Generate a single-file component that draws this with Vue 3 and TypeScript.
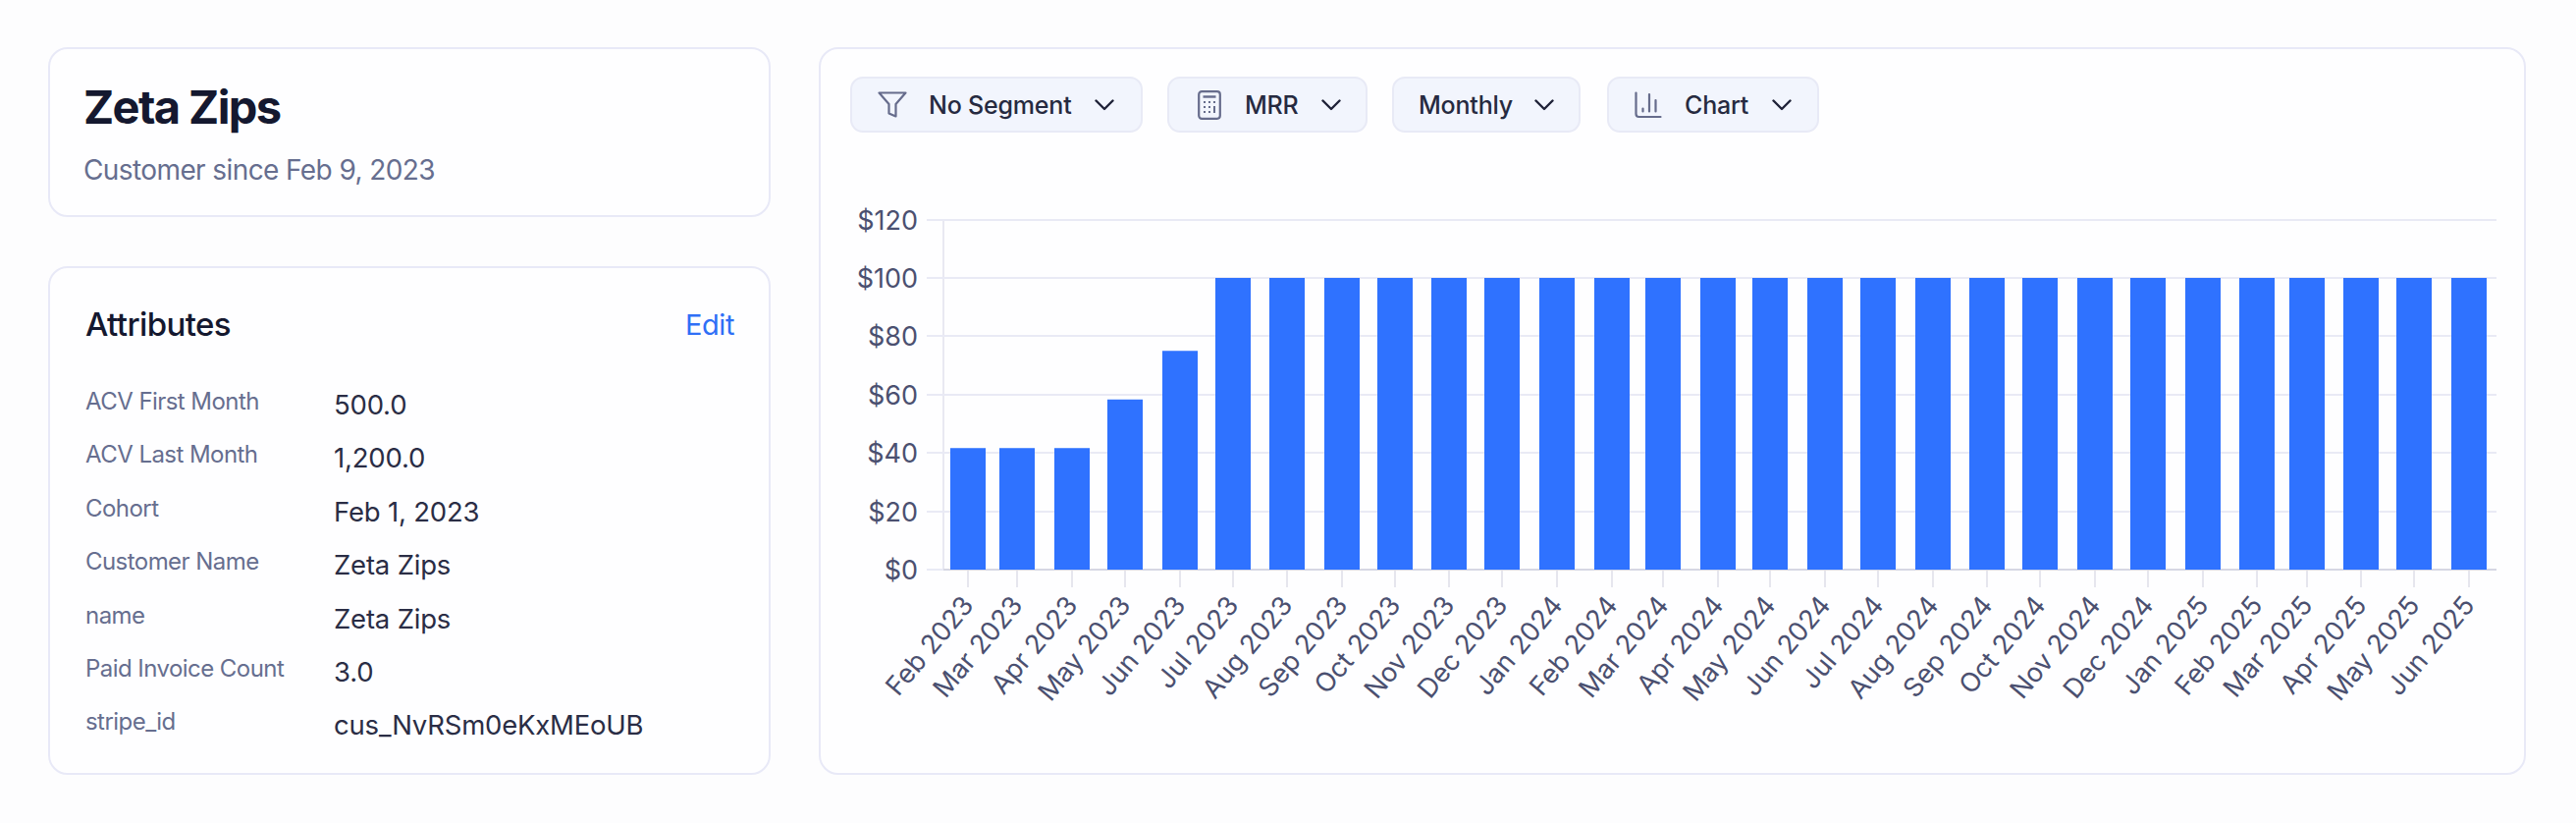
<script setup lang="ts">
interface Bar { label: string; x: number; top: number }
const monthNames = ['Jan', 'Feb', 'Mar', 'Apr', 'May', 'Jun', 'Jul', 'Aug', 'Sep', 'Oct', 'Nov', 'Dec']
const values = [41.67, 41.67, 41.67, 58.33, 75]
const zeroY = 580
const pxPerDollar = 2.97
const bars: Bar[] = []
const start = Date.UTC(2023, 1, 1)
for (let i = 0; i < 29; i++) {
  const m = 1 + i
  const t = Date.UTC(2023, m, 1)
  const d = (t - start) / 86400000
  const value = i < values.length ? values[i] : 100
  bars.push({
    label: `${monthNames[m % 12]} ${2023 + Math.floor(m / 12)}`,
    x: Math.round(986 + d * 1.7967),
    top: zeroY - value * pxPerDollar,
  })
}
const grid = [120, 100, 80, 60, 40, 20, 0].map((v) => ({ v, y: Math.round(zeroY - v * pxPerDollar) }))
const attributes: [string, string][] = [
  ['ACV First Month', '500.0'],
  ['ACV Last Month', '1,200.0'],
  ['Cohort', 'Feb 1, 2023'],
  ['Customer Name', 'Zeta Zips'],
  ['name', 'Zeta Zips'],
  ['Paid Invoice Count', '3.0'],
  ['stripe_id', 'cus_NvRSm0eKxMEoUB'],
]
</script>

<template>
  <div class="page">
    <div class="left">
      <section class="card head">
        <h1>Zeta Zips</h1>
        <p>Customer since Feb 9, 2023</p>
      </section>
      <section class="card attrs">
        <div class="attrs-top">
          <h2>Attributes</h2>
          <a>Edit</a>
        </div>
        <dl>
          <div v-for="row in attributes" :key="row[0]" class="row">
            <dt>{{ row[0] }}</dt>
            <dd>{{ row[1] }}</dd>
          </div>
        </dl>
      </section>
    </div>
    <section class="card main">
      <div class="toolbar">
        <button class="btn b1">
          <svg class="ico" width="30" height="28" viewBox="0 0 30 28" fill="none" stroke="#666c8c" stroke-width="2.2" stroke-linejoin="round">
            <path d="M1.5 1.5h27L18.5 13v12.5l-7-3V13z" />
          </svg>
          <span>No Segment</span>
          <svg class="chev" width="20" height="12" viewBox="0 0 20 12" fill="none" stroke="#1f2238" stroke-width="2.4" stroke-linecap="round" stroke-linejoin="round"><path d="M1.5 1.5 10 10l8.5-8.5" /></svg>
        </button>
        <button class="btn b2">
          <svg class="ico" width="24" height="30" viewBox="0 0 24 30" fill="none" stroke="#666c8c" stroke-width="2.2">
            <rect x="1.2" y="1.2" width="21.6" height="27.6" rx="3" />
            <path d="M5.5 6.5h13" stroke-width="2.4" />
            <path d="M6 12h2M11 12h2M16 12h2M6 17h2M11 17h2M6 22h2M11 22h2M17 16v7" stroke-width="2" />
          </svg>
          <span>MRR</span>
          <svg class="chev" width="20" height="12" viewBox="0 0 20 12" fill="none" stroke="#1f2238" stroke-width="2.4" stroke-linecap="round" stroke-linejoin="round"><path d="M1.5 1.5 10 10l8.5-8.5" /></svg>
        </button>
        <button class="btn b3">
          <span>Monthly</span>
          <svg class="chev" width="20" height="12" viewBox="0 0 20 12" fill="none" stroke="#1f2238" stroke-width="2.4" stroke-linecap="round" stroke-linejoin="round"><path d="M1.5 1.5 10 10l8.5-8.5" /></svg>
        </button>
        <button class="btn b4">
          <svg class="ico" width="28" height="28" viewBox="0 0 28 28" fill="none" stroke="#666c8c" stroke-width="2.2" stroke-linecap="round">
            <path d="M1.5 1.5V23a3 3 0 0 0 3 3h22" />
            <path d="M8.5 17.5v3M15 3v17.5M21.5 9v11.5" />
          </svg>
          <span>Chart</span>
          <svg class="chev" width="20" height="12" viewBox="0 0 20 12" fill="none" stroke="#1f2238" stroke-width="2.4" stroke-linecap="round" stroke-linejoin="round"><path d="M1.5 1.5 10 10l8.5-8.5" /></svg>
        </button>
      </div>
      <svg class="chart" width="1735" height="560" viewBox="836 200 1735 560">
        <line x1="961" x2="961" y1="223" y2="580" stroke="#e9e9f2" stroke-width="2" />
        <g v-for="g in grid" :key="g.v">
          <line x1="944" x2="2543" :y1="g.y" :y2="g.y" stroke="#e9eaf5" stroke-width="2" />
          <text x="935" :y="g.y + 10" text-anchor="end" class="tick">${{ g.v }}</text>
        </g>
        <line x1="961" x2="2543" y1="580" y2="580" stroke="#d6d7e3" stroke-width="2" />
        <g v-for="b in bars" :key="b.label">
          <rect :x="b.x - 18" :y="b.top" width="36" :height="zeroY - b.top" fill="#2f72ff" />
          <line :x1="b.x" :x2="b.x" y1="581" y2="598" stroke="#e6e6ee" stroke-width="2" />
          <text :transform="`translate(${b.x + 7} 617) rotate(-50)`" text-anchor="end" class="tick">{{ b.label }}</text>
        </g>
      </svg>
    </section>
  </div>
</template>

<style scoped>
.page {
  box-sizing: border-box;
  width: 2624px;
  height: 838px;
  padding: 48px 51px 49px 49px;
  display: flex;
  gap: 49px;
  background: #fdfdfe;
  font-family: Inter, "Liberation Sans", sans-serif;
  overflow: hidden;
}
.left {
  width: 736px;
  flex: none;
  display: flex;
  flex-direction: column;
  gap: 50px;
}
.card {
  box-sizing: border-box;
  background: #fefeff;
  border: 2px solid #e8e9f7;
  border-radius: 20px;
}
.head {
  height: 173px;
  padding: 33px 34px 0;
}
h1 {
  margin: 0;
  font-size: 47px;
  line-height: 52px;
  font-weight: 700;
  letter-spacing: -1.6px;
  color: #14182f;
}
.head p {
  margin: 21px 0 0;
  font-size: 28px;
  line-height: 34px;
  letter-spacing: -0.6px;
  color: #666e8f;
}
.attrs {
  flex: 1;
  padding: 37px 35px 0 36px;
}
.attrs-top {
  display: flex;
  justify-content: space-between;
  align-items: center;
  height: 40px;
}
h2 {
  margin: 0;
  font-size: 33px;
  font-weight: 500;
  letter-spacing: -0.6px;
  color: #14182f;
}
.attrs-top a {
  font-size: 29px;
  letter-spacing: -0.4px;
  color: #2f6ff6;
}
dl {
  margin: 44px 0 0;
}
.row {
  display: grid;
  grid-template-columns: 253px 1fr;
  height: 54.4px;
}
dt {
  font-size: 24px;
  line-height: 30px;
  letter-spacing: -0.55px;
  color: #666e8f;
}
dd {
  margin: 1px 0 0;
  font-size: 27.5px;
  line-height: 34px;
  letter-spacing: -0.2px;
  color: #2a2d45;
}
.main {
  flex: 1;
  padding-top: 28px;
}
.toolbar {
  display: flex;
  align-items: center;
  gap: 25px;
  margin-left: 30px;
}
.btn {
  box-sizing: border-box;
  height: 57px;
  display: flex;
  align-items: center;
  flex: none;
  padding: 0;
  background: #f2f5fd;
  border: 2px solid #e8eaf6;
  border-radius: 13px;
  font: inherit;
  font-size: 25px;
  font-weight: 500;
  letter-spacing: -0.2px;
  color: #262a40;
}
.b1 { width: 298px; padding-left: 26px; }
.b2 { width: 204px; padding-left: 29px; }
.b3 { width: 192px; padding-left: 25px; }
.b4 { width: 216px; padding-left: 26px; margin-left: 2px; }
.b1 .ico { margin-right: 22px; }
.b2 .ico { margin-right: 24px; }
.b4 .ico { margin-right: 23px; }
.chev { margin-left: 24px; flex: none; }
.b2 .chev { margin-left: 23px; }
.b3 .chev { margin-left: 22px; }
.chart {
  display: block;
  margin-top: 65px;
}
.tick {
  font-family: Inter, "Liberation Sans", sans-serif;
  font-size: 27px;
  fill: #4b5070;
}
</style>
